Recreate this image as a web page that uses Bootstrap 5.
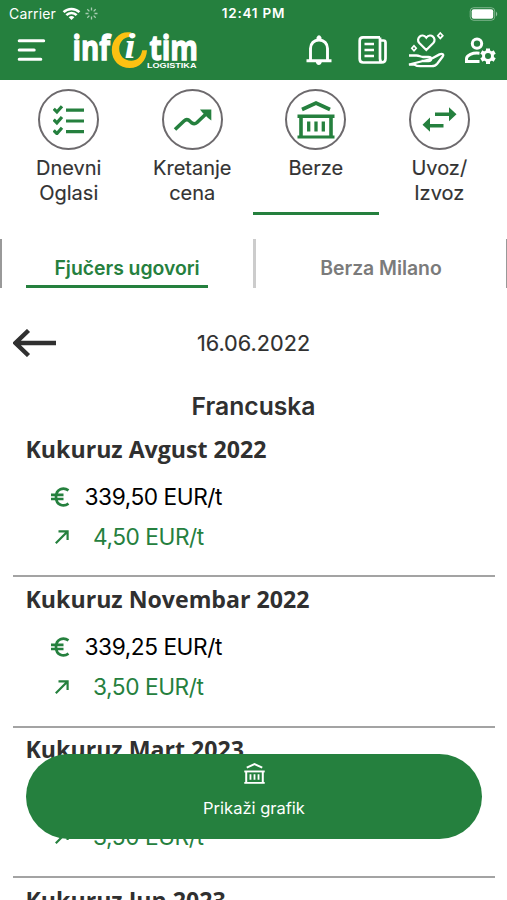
<!DOCTYPE html>
<html lang="sr">
<head>
<meta charset="utf-8">
<meta name="viewport" content="width=device-width, initial-scale=1">
<title>Infotim Logistika</title>
<link href="https://cdn.jsdelivr.net/npm/bootstrap@5.3.0/dist/css/bootstrap.min.css" rel="stylesheet">
<style>
:root{--green:#25803e;--ink:#303030}
body{font-family:Inter,"Liberation Sans",sans-serif;color:var(--ink);height:900px;overflow:hidden;background:#fff}
svg{display:block;flex:none}
.top{background:var(--green);height:80px;color:#fff}
.status{height:27px;font-size:14px;line-height:27px;padding:0 9px}
.status>*{flex:1 1 0}
.clock{font-weight:600;font-size:13.5px;letter-spacing:.75px}
.carrier{letter-spacing:.15px}
.mainbar{height:53px;padding:0 10px 0 17px}
.brand{margin-left:23px}
.tabs{height:135px;padding:9px 7px 0 7px}
.tab-item{flex:0 0 123.5px;height:126px;font-size:20px;line-height:25px;text-align:center;border-bottom:3px solid transparent;color:#333;-webkit-text-stroke:.15px}
.tab-item.on{border-color:var(--green);flex-basis:126.500px;margin:0 -1.500px}
.ring{width:61px;height:61px;border:2px solid #6d6a6d;border-radius:50%;color:var(--green);margin-bottom:6px}
.subtabs{height:49px;margin-top:24px;border-left:2px solid #999;border-right:1px solid #999;font-size:19.4px;font-weight:600;color:#7b7b7b;letter-spacing:-.03px}
.subtabs>div{flex:1 1 0;min-width:0}
.subtabs>.first{flex:0 0 254px;border-right:3px solid #ccc;padding:0 45px 0 23.500px}
.subtabs .sel{color:var(--green);border-bottom:3px solid var(--green);height:49px;padding-left:29px;white-space:nowrap}
.subtabs span{line-height:58px}
.daterow{height:110px;padding:0 13px;font-size:21.700px;display:grid;grid-template-columns:1fr auto 1fr;align-items:center;-webkit-text-stroke:.15px}
.country{font-size:24.700px;font-weight:600;line-height:30px;margin-top:-7px;text-align:center;padding-bottom:6px;height:36px}
.quote{height:150.400px;margin:0 12px 0 13px;padding:9.500px 0 0 12.500px;border-bottom:2px solid #a3a3a3}
.quote h2{font:700 23.150px/25px "Open Sans","Noto Sans",sans-serif;margin:0 0 15px;color:var(--ink)}
.price,.change{font-size:22.700px;line-height:40px;height:40px;letter-spacing:-.45px}
.price{color:#000;padding-left:24px}
.price svg{color:var(--green)}
.price span{margin-left:15px}
.change{color:var(--green);padding-left:29.500px}
.cta{position:fixed;left:26px;top:754px;width:456px;height:85px;border-radius:43px;background:var(--green);color:#fff;border:0;font-size:16.500px;z-index:5;padding:9px 0 0}
.cta span{margin-top:12px}
</style>
<script src="https://cdn.jsdelivr.net/npm/bootstrap@5.3.0/dist/js/bootstrap.bundle.min.js"></script>
</head>
<body>
<svg width="0" height="0" class="position-absolute">
<symbol id="bank" viewBox="0 0 38 38"><g fill="none" stroke="currentColor"><path d="M5 8.500 19 2l14 6.500" stroke-width="3.600"/><path d="M.5 15.300h37" stroke-width="3.400"/><path d="M.5 36h37" stroke-width="3.200"/><path d="M4 15v21M34 15v21" stroke-width="3.600"/><path d="M11.700 20.500v10M19 20.500v10M26.300 20.500v10" stroke-width="3.300"/></g></symbol>
<symbol id="euro" viewBox="0 0 20 20"><path d="M18.500 3.300C13.600-.2 6 1.600 6 10s7.600 10.200 12.500 6.700M1 7.900h12.500M1 12h12.500" fill="none" stroke="currentColor" stroke-width="2.700"/></symbol>
<symbol id="rise" viewBox="0 0 14 14"><path d="M.8 13.200 12.500 1.500M3.500 1.400h9.100v8.600" fill="none" stroke="currentColor" stroke-width="2.200"/></symbol>
</svg>
<header class="top">
  <div class="status d-flex">
    <div class="d-flex align-items-center"><span class="carrier">Carrier</span>
      <svg style="margin-left:6px" width="19" height="14" viewBox="0 0 20 15" fill="none" stroke="#fff" stroke-width="2.700"><path d="M1.500 5.600a12 12 0 0 1 17 0M4.500 8.800a7.700 7.700 0 0 1 11 0"/><path d="m10 14-3-3a4.200 4.200 0 0 1 6 0z" fill="#fff" stroke="none"/></svg>
      <svg class="ms-1" width="13" height="13" viewBox="-6.500 -6.500 13 13" stroke="#fff" stroke-width="1.300"><path d="M0-3V-6M0 3V6M3 0H6M-3 0H-6" opacity=".6"/><path d="m2.100 2.100 2.100 2.100M-2.100-2.100l-2.100-2.100M2.100-2.100l2.100-2.100M-2.100 2.100l-2.100 2.100" opacity=".6"/></svg>
    </div>
    <div class="clock text-center">12:41 PM</div>
    <div class="d-flex align-items-center justify-content-end"><svg width="30" height="14" viewBox="0 0 30 14"><rect x="2.200" y=".7" width="24.500" height="12.600" rx="3.500" fill="none" stroke="#fff" stroke-opacity=".4"/><rect x="3.700" y="2.200" width="21.500" height="9.600" rx="2" fill="#fff"/><path d="M28 4.500q2.500 2.500 0 5z" fill="#fff" opacity=".5"/></svg></div>
  </div>
  <nav class="mainbar d-flex">
    <svg width="30" height="46" viewBox="17 27 30 46" stroke="#fff" stroke-width="3" stroke-linecap="round"><path d="M19.200 40.700h24.500M19.200 50h15M19.200 59.300h21.600"/></svg>
    <svg class="brand" width="128" height="46" viewBox="70 27 128 46" fill="#fff" font-family="Open Sans,Noto Sans,sans-serif" font-weight="700">
      <g font-size="34.500" stroke="#fff" stroke-width="1.300"><text x="72.500" y="60" textLength="37.500" lengthAdjust="spacingAndGlyphs">inf</text><text x="149.500" y="60" textLength="48.500" lengthAdjust="spacingAndGlyphs">tim</text></g>
      <path d="M131.500 32.600C121 30 111.800 38.500 111.800 50c0 11 8 18 18 18 9.700 0 16.700-7.500 17.200-17.800h-4.800c-1 6.500-5.200 10.500-11 10.500-7 0-12-5-12-12 0-6.500 4.500-11.500 10.500-11.700z" fill="#fcc112"/>
      <text x="124.500" y="57.500" font-family="Liberation Serif,serif" font-style="italic" font-size="36" textLength="11" lengthAdjust="spacingAndGlyphs">i</text>
      <text x="147" y="67.700" font-family="Liberation Sans,sans-serif" font-size="6.500" textLength="49.500" lengthAdjust="spacingAndGlyphs">LOGISTIKA</text>
    </svg>
    <svg class="ms-auto" width="192" height="46" viewBox="305 27 192 46" fill="none" stroke="#fff" stroke-width="2.900">
      <path d="M310.500 60.500V48.500c0-5 3.500-8.500 8.500-8.500s8.500 3.500 8.500 8.500v12M306.500 60.700h25"/><path d="M316.500 39.500v-2q2.500-4.500 5 0v2zM315.800 62h6q-.7 3-3 3t-3-3z" fill="#fff" stroke="none"/>
      <path d="M380 37.400h-17q-3.300 0-3.300 3.300v18.300q0 3.500 3.500 3.500h18.300q4 0 4-4V42.500q0-2-2-2h-2.500M380 37.500v21q0 4 3 4M364.500 44h9.500M364.500 50h9.500M364.500 56h9.500" stroke-width="2.700"/>
      <path d="M426.300 50l-7-7c-4-4.300 2.600-11 7-5.300 4.400-5.700 11 1 7 5.300z" stroke-width="2.200"/><path d="M409 55.500h7.500c3 0 4 1.500 6.500 1.500h5.500c3.500 0 3.500 4 0 4h-7M431 59l8.500-4.600c3-1.300 4.500 0 3.200 2.100l-5.500 7.200q-2 2.500-5.500 2.500h-11.500q-3.500 0-6-1.700H409z" stroke-width="2.300"/>
      <path d="M414 45.700l2.200 2.500-2.200 2.500-2.200-2.500zM440.300 33l2.500 2.700-2.500 2.700-2.500-2.700z" stroke-width="1.700"/>
      <circle cx="477" cy="43.600" r="4.700" stroke-width="3"/><path d="M479.500 53.200c-7-.8-13 1.800-13 5.600v2.700h13" stroke-width="3"/>
      <circle cx="488" cy="56" r="4.500" stroke-width="3"/><path d="M488 51.500v-3M488 60.500v3.500M492.300 53.500l2.400-1.400M483.700 58.500l-2.400 1.400M492.300 58.500l2.400 1.400M483.700 53.500l-2.400-1.400" stroke-width="4"/>
    </svg>
  </nav>
</header>
<nav class="tabs d-flex">
  <div class="tab-item"><div class="ring mx-auto d-flex align-items-center justify-content-center"><svg width="31" height="30" viewBox="0 0 31 30" fill="none" stroke="currentColor" stroke-width="3.200"><path d="M13 5.200h18M13 16h18M13 26.700h18M.7 3.800l3.200 3.200L9 1.200M.7 14.600l3.200 3.200L9 12M.7 25.400l3.200 3.200L9 22.800"/></svg></div>Dnevni<br>Oglasi</div>
  <div class="tab-item"><div class="ring mx-auto d-flex align-items-center justify-content-center"><svg width="39" height="24" viewBox="0 0 39 24"><path d="M2 21.500 11 13q3-2.800 6 .3l2 1.700q2.500 1.700 5-.5L34 5" fill="none" stroke="currentColor" stroke-width="3.600"/><path d="M27 1.500h11.300v11l-3.300-2.500-5.800-5.800z" fill="currentColor"/></svg></div>Kretanje<br>cena</div>
  <div class="tab-item on"><div class="ring mx-auto d-flex align-items-center justify-content-center"><svg width="38" height="38"><use href="#bank"/></svg></div>Berze</div>
  <div class="tab-item"><div class="ring mx-auto d-flex align-items-center justify-content-center"><svg width="35" height="25" viewBox="0 0 35 25" fill="currentColor"><path d="M13 5.500h14V.3L34.500 7.300 27 14.300V9H13zM21.500 17H8V10.500L.5 17.700 8 24.700v-4.200h13.500z"/></svg></div>Uvoz/<br>Izvoz</div>
</nav>
<div class="subtabs d-flex">
  <div class="first"><div class="sel"><span>Fjučers ugovori</span></div></div>
  <div class="text-center"><span>Berza Milano</span></div>
</div>
<main>
  <div class="daterow"><svg width="43" height="28" viewBox="0 0 43 28" fill="none" stroke="#303030" stroke-width="4.400"><path d="M2 14h41M15.500 1.500 2.500 14l13 12.500"/></svg><span>16.06.2022</span><span></span></div>
  <h1 class="country mb-0">Francuska</h1>
  <section class="quote"><h2>Kukuruz Avgust 2022</h2><div class="price d-flex align-items-center"><svg width="20" height="20"><use href="#euro"/></svg><span>339,50 EUR/t</span></div><div class="change d-flex align-items-center"><svg width="14" height="14"><use href="#rise"/></svg><span class="ms-4">4,50 EUR/t</span></div></section>
  <section class="quote"><h2>Kukuruz Novembar 2022</h2><div class="price d-flex align-items-center"><svg width="20" height="20"><use href="#euro"/></svg><span>339,25 EUR/t</span></div><div class="change d-flex align-items-center"><svg width="14" height="14"><use href="#rise"/></svg><span class="ms-4">3,50 EUR/t</span></div></section>
  <section class="quote"><h2>Kukuruz Mart 2023</h2><div class="price"></div><div class="change d-flex align-items-center"><svg width="14" height="14"><use href="#rise"/></svg><span class="ms-4">3,50 EUR/t</span></div></section>
  <section class="quote border-0"><h2>Kukuruz Jun 2023</h2></section>
</main>
<button class="cta d-flex flex-column align-items-center" type="button"><svg width="21" height="21"><use href="#bank"/></svg><span>Prikaži grafik</span></button>
</body>
</html>
